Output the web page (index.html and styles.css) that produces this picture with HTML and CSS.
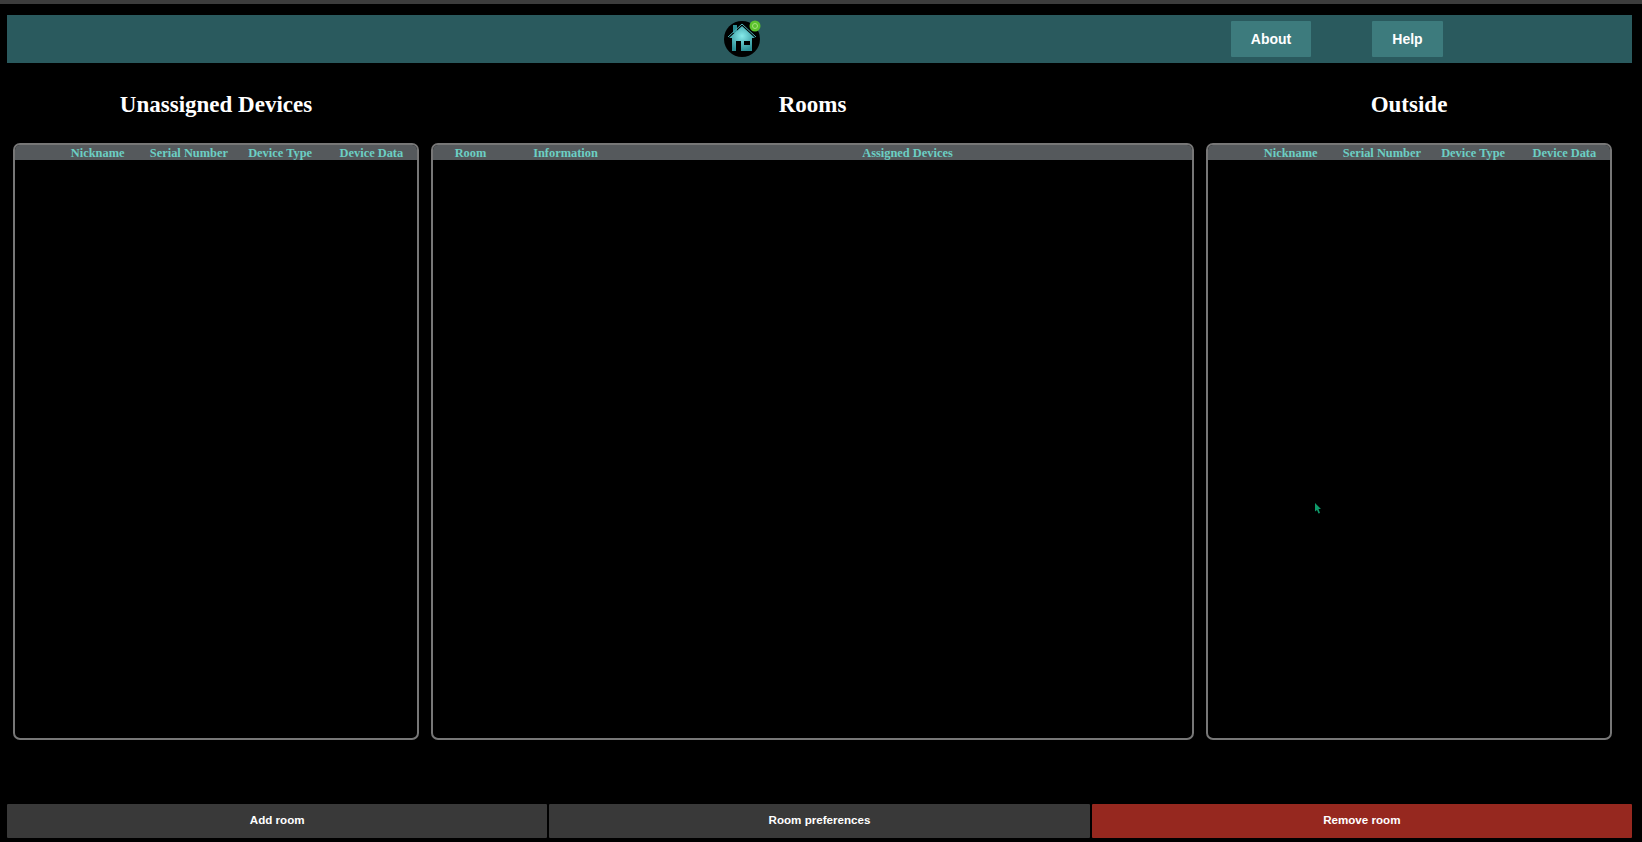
FILE: index.html
```html
<!DOCTYPE html>
<html lang="en">
<head>
    <meta charset="UTF-8">
    <title>Smart Home</title>
    <link rel="stylesheet" href="styles.css">
</head>
<body>
    <div class="topstrip"></div>
    <header class="navbar">
        <svg class="logo" viewBox="0 0 46 46" width="46" height="46">
            <defs>
                <radialGradient id="roof" cx="50%" cy="40%" r="60%">
                    <stop offset="0" stop-color="#86eaea"/>
                    <stop offset="1" stop-color="#2c8f96"/>
                </radialGradient>
            </defs>
            <circle cx="18" cy="23" r="18" fill="#000"/>
            <rect x="9" y="9" width="4" height="8" fill="#2c8f96"/>
            <path d="M18 10 L31 22 L28 22 L28 35 L8 35 L8 22 L5 22 Z" fill="url(#roof)"/>
            <path d="M4 21 L18 8 L32 21" fill="none" stroke="#4fb4b8" stroke-width="1"/>
            <rect x="12" y="25" width="5" height="10" fill="#000"/>
            <rect x="20" y="25" width="6" height="4" fill="#000"/>
            <circle cx="31" cy="10" r="5.5" fill="#5cc22e"/>
            <circle cx="31" cy="10" r="2.5" fill="none" stroke="#a4e07a" stroke-width="1"/>
        </svg>
        <button class="nav-btn about">About</button>
        <button class="nav-btn help">Help</button>
    </header>

    <main class="columns">
        <section class="column">
            <h2>Unassigned Devices</h2>
            <div class="panel">
                <div class="thead devices">
                    <span></span>
                    <span>Nickname</span>
                    <span>Serial Number</span>
                    <span>Device Type</span>
                    <span>Device Data</span>
                </div>
            </div>
        </section>
        <section class="column">
            <h2>Rooms</h2>
            <div class="panel">
                <div class="thead rooms">
                    <span>Room</span>
                    <span>Information</span>
                    <span>Assigned Devices</span>
                </div>
            </div>
        </section>
        <section class="column">
            <h2>Outside</h2>
            <div class="panel">
                <div class="thead devices">
                    <span></span>
                    <span>Nickname</span>
                    <span>Serial Number</span>
                    <span>Device Type</span>
                    <span>Device Data</span>
                </div>
            </div>
        </section>
    </main>

    <footer class="actions">
        <button class="action">Add room</button>
        <button class="action">Room preferences</button>
        <button class="action danger">Remove room</button>
    </footer>

    <svg class="cursor" viewBox="0 0 7 11" width="7" height="11">
        <path d="M0 0 L6 6 L3.5 6 L5 10 L3.5 10.5 L2 7 L0 8.5 Z" fill="#0f9a6a"/>
    </svg>
</body>
</html>
```

FILE: styles.css
```css
body{
    margin: 0;
    padding: 0;
    height: 842px;
    overflow: hidden;
    background-color: #000;
    color: white;
    display: flex;
    flex-direction: column;
    position: relative;
}
.topstrip{
    height: 4px;
    background-color: #3c3c3c;
}
.navbar{
    height: 48px;
    margin: 11px 10px 0 7px;
    background-color: #2a5a5e;
    display: flex;
    align-items: center;
    padding-left: 717px;
}
.logo{
    flex: none;
}
.nav-btn{
    height: 36px;
    border: none;
    border-radius: 1px;
    background-color: #3d7b7d;
    color: white;
    font-family: "Liberation Sans", sans-serif;
    font-weight: bold;
    font-size: 14px;
}
.about{
    width: 80px;
    margin-left: 461px;
}
.help{
    width: 71px;
    margin-left: 61px;
}

.columns{
    flex: 1;
    display: grid;
    grid-template-columns: 406px 763px 406px;
    gap: 12px;
    padding-left: 13px;
}
.column{
    display: flex;
    flex-direction: column;
}
.column h2{
    margin: 0;
    height: 80px;
    line-height: 84px;
    text-align: center;
    font-family: "Liberation Serif", serif;
    font-size: 23px;
    font-weight: bold;
}
.panel{
    height: 597px;
    box-sizing: border-box;
    border: 2px solid #777;
    border-radius: 7px;
    overflow: hidden;
}
.thead{
    display: grid;
    height: 15px;
    background-color: #55595c;
    color: #6ccfc4;
    font-family: "Liberation Serif", serif;
    font-size: 12.4px;
    font-weight: bold;
    line-height: 16px;
    text-align: center;
}
.thead.devices{
    grid-template-columns: 37px repeat(4, 1fr);
}
.thead.rooms{
    grid-template-columns: 75px 115px 1fr;
}

.actions{
    display: grid;
    grid-template-columns: repeat(3, 1fr);
    gap: 2px;
    height: 34px;
    margin: 0 10px 4px 7px;
}
.action{
    border: none;
    border-radius: 1px;
    background-color: #393939;
    color: white;
    font-family: "Liberation Sans", sans-serif;
    font-weight: bold;
    font-size: 11.6px;
    padding-bottom: 5px;
}
.danger{
    background-color: #96281f;
}
.cursor{
    position: absolute;
    left: 1315px;
    top: 503px;
}
```
